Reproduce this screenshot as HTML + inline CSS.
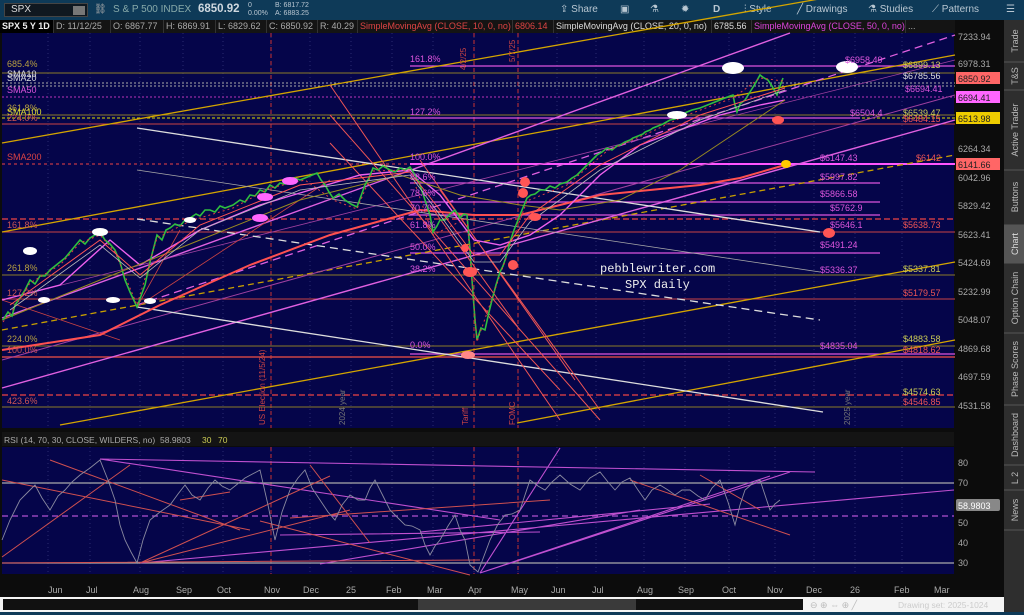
<!DOCTYPE html>
<html><head><meta charset="utf-8"><style>
*{margin:0;padding:0;box-sizing:border-box}
body{width:1024px;height:615px;overflow:hidden;background:#0c0c0c;font-family:"Liberation Sans",sans-serif;position:relative}
.tb{position:absolute;left:0;top:0;width:1024px;height:20px;background:#0e3a58;color:#b9c7d2;font-size:10px}
.tb span{position:absolute;top:4px}
.hd{position:absolute;top:20px;left:0;width:955px;height:13px;background:#141414;font-size:9px;color:#aaa;white-space:nowrap}
.hd span{position:absolute;top:0;line-height:13px;padding:0 2px;border-right:1px solid #333}
</style></head><body>
<div class="tb">
<div style="position:absolute;left:4px;top:3px;width:84px;height:14px;background:#101820;border:1px solid #444;color:#ddd;font-size:10px;padding-left:6px;line-height:12px">SPX<div style="position:absolute;right:2px;top:2px;width:12px;height:9px;background:#777"></div></div>
<span style="left:94px;color:#aaa">⛓</span>
<span style="left:113px;color:#8aa">S &amp; P 500 INDEX</span>
<span style="left:198px;font-size:11.5px;font-weight:bold;color:#cfd8df;top:3px">6850.92</span>
<span style="left:248px;font-size:7px;top:2px;line-height:8px">0<br>0.00%</span>
<span style="left:275px;font-size:7px;top:2px;line-height:8px">B: 6817.72<br>A: 6883.25</span>
<span style="left:560px">⇪ Share</span><span style="left:620px">▣</span><span style="left:650px">⚗</span><span style="left:681px">✹</span><span style="left:713px;font-weight:bold">D</span><span style="left:744px">⫶ Style</span><span style="left:797px">╱ Drawings</span><span style="left:868px">⚗ Studies</span><span style="left:932px">⟋ Patterns</span><span style="left:1006px">☰</span>
</div>
<div class="hd">
<span style="left:0;color:#eee;font-weight:bold;background:#000;width:54px">SPX 5 Y 1D</span>
<span style="left:54px;width:57px">D: 11/12/25</span><span style="left:111px;width:53px">O: 6867.77</span><span style="left:164px;width:52px">H: 6869.91</span><span style="left:216px;width:51px">L: 6829.62</span><span style="left:267px;width:51px">C: 6850.92</span><span style="left:318px;width:40px">R: 40.29</span>
<span style="left:358px;color:#d44;width:155px;overflow:hidden">SimpleMovingAvg (CLOSE, 10, 0, no)</span><span style="left:513px;color:#d44;width:41px">6806.14</span>
<span style="left:554px;color:#ddd;width:158px;overflow:hidden">SimpleMovingAvg (CLOSE, 20, 0, no)</span><span style="left:712px;color:#ddd;width:40px">6785.56</span>
<span style="left:752px;color:#d4d;width:154px;overflow:hidden">SimpleMovingAvg (CLOSE, 50, 0, no)</span><span style="left:906px;border:none">...</span>
</div>
<svg style="position:absolute;left:0;top:0" width="1024" height="615" font-family="Liberation Sans" font-size="9">
<rect x="2" y="33" width="952" height="395" fill="#05054a"/>
<rect x="2" y="432" width="952" height="14" fill="#141414"/>
<text x="4" y="443" fill="#aaa" font-size="8.5">RSI (14, 70, 30, CLOSE, WILDERS, no)</text><text x="160" y="443" fill="#aaa" font-size="8.5">58.9803</text><text x="202" y="443" fill="#cc5" font-size="8.5">30</text><text x="218" y="443" fill="#cc5" font-size="8.5">70</text>
<rect x="2" y="447" width="952" height="127" fill="#05054a"/>
<g stroke="#2a2a70" stroke-dasharray="1 3">
<path d="M48 33V428M90 33V428M140 33V428M183 33V428M223 33V428M271 33V428M310 33V428M351 33V428M392 33V428M433 33V428M474 33V428M518 33V428M557 33V428M596 33V428M644 33V428M685 33V428M729 33V428M775 33V428M814 33V428M855 33V428M902 33V428"/>
<path d="M48 447V574M90 447V574M140 447V574M183 447V574M223 447V574M271 447V574M310 447V574M351 447V574M392 447V574M433 447V574M474 447V574M518 447V574M557 447V574M596 447V574M644 447V574M685 447V574M729 447V574M775 447V574M814 447V574M855 447V574M902 447V574"/>
</g>
<g stroke="#c33" stroke-dasharray="4 3"><path d="M271 33V428M474 33V428M518 33V428M271 447V574M474 447V574M518 447V574"/></g>
<g stroke-width="1">
<path d="M2 73H955" stroke="#8a7a28"/>
<path d="M2 83H955M2 86H955" stroke="#aaa" stroke-dasharray="2 2"/>
<path d="M2 97H955" stroke="#b3b" stroke-dasharray="2 2"/>
<path d="M2 115H955" stroke="#8a7a28"/>
<path d="M2 118H955" stroke="#dd0" stroke-dasharray="3 2"/>
<path d="M2 124H955" stroke="#c44"/>
<path d="M2 164H955" stroke="#e44" stroke-dasharray="3 3"/>
<path d="M2 219H955" stroke="#e44" stroke-dasharray="6 3" stroke-width="1.3"/>
<path d="M2 232H955" stroke="#c44"/>
<path d="M2 275H955" stroke="#8a7a28"/>
<path d="M2 299H955" stroke="#c44"/>
<path d="M2 346H955" stroke="#8a7a28"/>
<path d="M2 357H955" stroke="#c44" stroke-width="1.5"/>
<path d="M2 395H955" stroke="#e44" stroke-dasharray="6 3" stroke-width="1.3"/>
<path d="M2 407H955" stroke="#8a7a28"/>
<path d="M410 66H955M410 118H860M410 183H880M410 202H880M410 215H880M410 253H880M410 354H955" stroke="#d5d" stroke-width="1.2"/>
<path d="M410 164H955" stroke="#f5f" stroke-width="2"/>
</g>
<g fill="none">
<path d="M2 143L955 -25" stroke="#d4a500" stroke-width="1.3"/>
<path d="M2 232L955 55" stroke="#d4a500" stroke-width="1.3"/>
<path d="M60 425L955 262" stroke="#d4a500" stroke-width="1.3"/>
<path d="M517 423L955 340" stroke="#d4a500" stroke-width="1.3"/>
<path d="M2 330L955 155" stroke="#c9a000" stroke-dasharray="6 4" stroke-width="1.3"/>
<path d="M2 318L790 33" stroke="#e060e0" stroke-width="1.4"/>
<path d="M2 388L955 120" stroke="#e060e0" stroke-width="1.4"/>
<path d="M2 360L955 95" stroke="#a040a0" stroke-width="1"/>
<path d="M137 305L955 35" stroke="#e060e0" stroke-dasharray="8 5" stroke-width="1.3"/>
<path d="M2 300L955 60" stroke="#a040a0" stroke-width="0.8"/>
<path d="M137 128L820 232" stroke="#ddd" stroke-width="1.3"/>
<path d="M137 170L820 272" stroke="#aaa" stroke-width="0.8"/>
<path d="M137 219L820 320" stroke="#ddd" stroke-dasharray="8 5" stroke-width="1.3"/>
<path d="M137 307L823 412" stroke="#ddd" stroke-width="1.3"/>
<path d="M330 85L560 420M330 115L600 420M330 143L560 390M420 160L575 380M430 205L520 330M440 190L600 410" stroke="#e55" stroke-width="1"/>
<path d="M2 300L120 340M137 307L180 230M137 307L330 180" stroke="#c44" stroke-width="0.8"/>
<path d="M2 350L100 335L160 305L250 265L330 235L420 210L474 215L520 215L560 205L600 195L650 190L700 185L740 178L785 165" stroke="#ff5050" stroke-width="2"/>
<path d="M2 300L60 285L110 240L140 265L200 230L260 205L310 190L360 175L410 170L440 195L474 240L500 245L530 235L560 215L600 175L640 145L680 130L720 115L760 105L785 100" stroke="#ee60ee" stroke-width="1.4"/>
<path d="M2 320L100 280L200 240L300 200L400 175L460 195L520 205L560 210L620 200L680 170L740 130L785 100" stroke="#9a8a20" stroke-width="1"/>
<path d="M3 320L8 312L12 316L15 305L20 298L25 290L30 280L35 284L40 276L45 276L50 270L55 266L60 262L65 258L70 252L75 246L80 240L85 244L90 238L95 235L100 232L105 240L110 244L115 250L120 262L125 280L130 292L137 307L141 296L145 285L150 262L157 235L162 240L166 230L170 228L175 224L180 226L185 220L190 218L196 214L200 216L205 210L210 210L215 212L220 206L225 208L233 205L240 200L245 202L250 195L255 196L260 190L265 192L270 185L275 188L280 183L285 184L290 182L295 178L300 180L305 178L310 176L317 173L321 180L325 185L329 192L333 198L339 194L345 200L351 204L357 207L361 196L365 185L369 178L373 168L378 170L383 166L390 170L395 172L400 168L405 170L410 167L415 175L420 185L425 200L430 215L433 232L437 226L440 220L445 220L450 214L455 210L460 218L464 214L467 215L470 250L472 280L475 320L477 340L481 328L485 330L489 312L492 300L496 285L500 272L503 266L505 260L508 250L510 242L514 230L518 220L522 210L527 198L531 195L535 194L540 190L545 190L550 186L555 188L560 184L567 182L572 178L577 175L582 170L587 165L592 160L597 155L602 152L607 148L612 150L617 146L620 145L625 142L630 140L633 138L638 136L643 134L645 132L650 130L653 128L658 126L663 124L670 120L675 119L680 116L687 112L692 110L696 109L700 108L705 106L710 104L715 102L720 100L725 98L730 96L733 95L735 105L737 112L740 104L745 100L750 92L755 84L760 75L764 78L768 80L772 86L777 95L780 86L783 78" stroke="#2fbf3f" stroke-width="1.6"/>
<path d="M3 322L15 307L30 283L60 265L80 243L100 235L115 252L137 305L157 238L190 221L233 208L270 188L305 180L333 200L357 209L373 171L410 170L433 235L467 218L477 342L500 275L527 201L567 185L607 151L653 131L687 115L733 98L760 78L783 81" stroke="#e04040" stroke-width="1" stroke-dasharray="2 3"/>
<path d="M10 305L100 240L140 275L200 225L300 185L410 172L440 210L474 255L500 255L530 215L600 165L700 115L785 88" stroke="#ff5555" stroke-width="1"/>
<path d="M10 310L100 245L140 278L200 230L300 190L410 175L440 215L474 262L500 262L530 222L600 170L700 120L785 90" stroke="#bbb" stroke-width="0.8"/>
</g>
<g>
<ellipse cx="30" cy="251" rx="7" ry="4" fill="#fff"/><ellipse cx="44" cy="300" rx="6" ry="3" fill="#fff"/><ellipse cx="100" cy="232" rx="8" ry="4" fill="#fff"/><ellipse cx="113" cy="300" rx="7" ry="3" fill="#fff"/>
<ellipse cx="150" cy="301" rx="6" ry="3" fill="#fff"/><ellipse cx="190" cy="220" rx="6" ry="3" fill="#fff"/><ellipse cx="265" cy="197" rx="8" ry="4" fill="#f6f"/><ellipse cx="260" cy="218" rx="8" ry="4" fill="#f6f"/><ellipse cx="290" cy="181" rx="8" ry="4" fill="#f6f"/>
<ellipse cx="733" cy="68" rx="11" ry="6" fill="#fff"/><ellipse cx="847" cy="67" rx="11" ry="6" fill="#fff"/><ellipse cx="677" cy="115" rx="10" ry="4" fill="#fff"/>
<ellipse cx="778" cy="120" rx="6" ry="4" fill="#f55"/><ellipse cx="829" cy="233" rx="6" ry="5" fill="#f55"/><ellipse cx="786" cy="164" rx="5" ry="4" fill="#fc0"/>
<ellipse cx="525" cy="182" rx="5" ry="5" fill="#f55"/><ellipse cx="523" cy="193" rx="5" ry="5" fill="#f55"/><ellipse cx="535" cy="217" rx="6" ry="4" fill="#f55"/><ellipse cx="513" cy="265" rx="5" ry="5" fill="#f55"/><ellipse cx="470" cy="272" rx="7" ry="5" fill="#f55"/><ellipse cx="468" cy="355" rx="7" ry="4" fill="#f88"/><ellipse cx="465" cy="248" rx="4" ry="4" fill="#f55"/>
</g>
<g font-size="9">
<text x="7" y="67" fill="#b8a040">685.4%</text><text x="7" y="81" fill="#ddd">SMA20</text><text x="7" y="77" fill="#ddd">SMA10</text><text x="7" y="93" fill="#d5d">SMA50</text><text x="7" y="111" fill="#b8a040">361.8%</text><text x="7" y="115" fill="#dd3">SMA100</text><text x="7" y="121" fill="#c55">224.0%</text>
<text x="7" y="160" fill="#d44">SMA200</text><text x="7" y="228" fill="#c55">161.8%</text><text x="7" y="271" fill="#b8a040">261.8%</text><text x="7" y="296" fill="#c55">127.2%</text><text x="7" y="342" fill="#b8a040">224.0%</text><text x="7" y="353" fill="#c55">100.0%</text><text x="7" y="404" fill="#c55">423.6%</text>
<g fill="#d5d"><text x="410" y="62">161.8%</text><text x="410" y="115">127.2%</text><text x="410" y="160">100.0%</text><text x="410" y="180">88.6%</text><text x="410" y="196">78.6%</text><text x="410" y="211">70.7%</text><text x="410" y="228">61.8%</text><text x="410" y="250">50.0%</text><text x="410" y="272">38.2%</text><text x="410" y="348">0.0%</text></g>
<g fill="#d5d"><text x="820" y="161">$6147.43</text><text x="820" y="180">$5997.82</text><text x="820" y="197">$5866.58</text><text x="830" y="211">$5762.9</text><text x="830" y="228">$5646.1</text><text x="820" y="248">$5491.24</text><text x="820" y="273">$5336.37</text><text x="820" y="349">$4835.04</text><text x="850" y="116">$6504.4</text><text x="845" y="63">$6958.49</text><text x="905" y="92">$6694.41</text></g>
<g fill="#cc5"><text x="903" y="68">$6899.13</text><text x="903" y="116">$6539.47</text><text x="903" y="272">$5337.81</text><text x="903" y="342">$4883.58</text><text x="903" y="395">$4574.63</text></g>
<g fill="#e55"><text x="916" y="161">$6142</text><text x="903" y="228">$5638.73</text><text x="903" y="296">$5179.57</text><text x="903" y="353">$4818.62</text><text x="903" y="405">$4546.85</text><text x="903" y="122">$6484.15</text></g>
<text x="903" y="79" fill="#ddd">$6785.56</text>
<text x="600" y="272" fill="#eee" font-family="Liberation Mono" font-size="12">pebblewriter.com</text>
<text x="625" y="288" fill="#eee" font-family="Liberation Mono" font-size="12">SPX daily</text>
<g fill="#c44" font-size="8"><text transform="translate(265,425) rotate(-90)">US Election (11/5/24)</text><text transform="translate(468,425) rotate(-90)">Tariff</text><text transform="translate(515,425) rotate(-90)">FOMC</text><text transform="translate(466,70) rotate(-90)">4/2/25</text><text transform="translate(515,62) rotate(-90)">5/7/25</text></g>
<text transform="translate(345,425) rotate(-90)" fill="#777" font-size="8">2024 year</text><text transform="translate(850,425) rotate(-90)" fill="#777" font-size="8">2025 year</text>
</g>
<g fill="none">
<path d="M2 483H954M2 563H954" stroke="#aaa" stroke-width="1.2"/>
<path d="M2 516H954" stroke="#b050d0" stroke-dasharray="6 4" stroke-width="1.3"/>
<path d="M100 459L815 472M100 459L500 520M140 563L954 490M320 564L640 510M480 573L560 448M480 573L790 472M480 573L770 476M420 532L710 504M280 535L540 532" stroke="#c050d0" stroke-width="1.1"/>
<path d="M2 480L250 530M2 557L130 465M50 460L240 530M2 563L480 560M140 563L350 510M140 563L330 476M180 500L230 492M260 521L470 575M310 465L370 543M630 480L790 535M700 475L760 510M290 518L550 500" stroke="#d05050" stroke-width="1"/>
<path d="M2 540L10 520L20 500L28 492L35 485L42 498L50 510L58 496L65 490L72 482L80 475L90 468L100 460L108 480L115 500L120 525L125 540L131 552L137 563L143 540L150 520L160 512L170 505L178 494L185 485L192 495L200 500L208 488L215 480L222 486L230 490L245 478L260 470L268 505L275 540L282 512L290 490L298 478L305 470L312 488L320 500L328 512L335 520L342 505L350 495L358 500L365 500L370 488L375 480L383 496L390 510L398 518L405 525L412 526L420 530L425 545L430 555L435 546L440 540L448 526L455 515L460 530L465 540L470 565L478 572L484 556L490 540L498 524L505 515L512 514L520 510L525 495L530 480L538 486L545 490L552 482L560 475L570 484L580 490L590 478L600 472L608 482L615 490L622 482L630 478L638 490L645 500L652 490L660 485L668 490L675 495L682 490L690 490L698 496L705 500L712 488L720 480L728 502L735 525L740 505L745 490L752 484L760 480L765 495L770 510L775 504L780 500" stroke="#8a8aa0" stroke-width="0.9"/>
</g>
<g fill="#aaa" font-size="9"><text x="958" y="466">80</text><text x="958" y="486">70</text><text x="958" y="526">50</text><text x="958" y="546">40</text><text x="958" y="566">30</text></g>
<rect x="956" y="499" width="44" height="12" rx="2" fill="#888"/><text x="958" y="509" fill="#fff" font-size="9">58.9803</text>
<g fill="#aaa" font-size="9"><text x="958" y="40">7233.94</text><text x="958" y="67">6978.31</text><text x="958" y="152">6264.34</text><text x="958" y="181">6042.96</text><text x="958" y="209">5829.42</text><text x="958" y="238">5623.41</text><text x="958" y="266">5424.69</text><text x="958" y="295">5232.99</text><text x="958" y="323">5048.07</text><text x="958" y="352">4869.68</text><text x="958" y="380">4697.59</text><text x="958" y="409">4531.58</text></g>
<rect x="956" y="72" width="44" height="12" fill="#f66"/><text x="958" y="82" fill="#222" font-size="9">6850.92</text>
<rect x="956" y="91" width="44" height="12" fill="#f6f"/><text x="958" y="101" fill="#222" font-size="9">6694.41</text>
<rect x="956" y="112" width="44" height="12" fill="#ec0"/><text x="958" y="122" fill="#222" font-size="9">6513.98</text>
<rect x="956" y="158" width="44" height="12" fill="#f66"/><text x="958" y="168" fill="#222" font-size="9">6141.66</text>
<g fill="#aaa" font-size="9"><text x="48" y="593">Jun</text><text x="86" y="593">Jul</text><text x="133" y="593">Aug</text><text x="176" y="593">Sep</text><text x="217" y="593">Oct</text><text x="264" y="593">Nov</text><text x="303" y="593">Dec</text><text x="346" y="593">25</text><text x="386" y="593">Feb</text><text x="427" y="593">Mar</text><text x="468" y="593">Apr</text><text x="511" y="593">May</text><text x="551" y="593">Jun</text><text x="592" y="593">Jul</text><text x="637" y="593">Aug</text><text x="678" y="593">Sep</text><text x="722" y="593">Oct</text><text x="767" y="593">Nov</text><text x="806" y="593">Dec</text><text x="850" y="593">26</text><text x="894" y="593">Feb</text><text x="934" y="593">Mar</text></g>
<rect x="0" y="597" width="1004" height="15" fill="#f4f4f4"/>
<rect x="3" y="599" width="800" height="11" fill="#111"/>
<rect x="418" y="599" width="218" height="11" fill="#3a3a3a"/>
<text x="810" y="608" fill="#bbb" font-size="9">⊖ ⊕ ⇔ ⊕ ╱</text>
<text x="898" y="608" fill="#ccc" font-size="8.5">Drawing set: 2025-1024</text>
<rect x="0" y="612" width="1024" height="3" fill="#0e3a58"/>
<!-- sidebar -->
<rect x="1004" y="20" width="20" height="592" fill="#2e2e2e"/>
<rect x="1004" y="225" width="20" height="38" fill="#555"/>
<g stroke="#555"><path d="M1004 62H1024M1004 90H1024M1004 170H1024M1004 225H1024M1004 263H1024M1004 333H1024M1004 405H1024M1004 465H1024M1004 490H1024M1004 530H1024"/></g>
<g fill="#bbb" font-size="9" text-anchor="middle">
<text transform="translate(1018,41) rotate(-90)">Trade</text>
<text transform="translate(1018,76) rotate(-90)">T&amp;S</text>
<text transform="translate(1018,130) rotate(-90)">Active Trader</text>
<text transform="translate(1018,197) rotate(-90)">Buttons</text>
<text transform="translate(1018,244) rotate(-90)" fill="#ddd">Chart</text>
<text transform="translate(1018,298) rotate(-90)">Option Chain</text>
<text transform="translate(1018,369) rotate(-90)">Phase Scores</text>
<text transform="translate(1018,435) rotate(-90)">Dashboard</text>
<text transform="translate(1018,478) rotate(-90)">L 2</text>
<text transform="translate(1018,510) rotate(-90)">News</text>
</g>
</svg>
</body></html>
